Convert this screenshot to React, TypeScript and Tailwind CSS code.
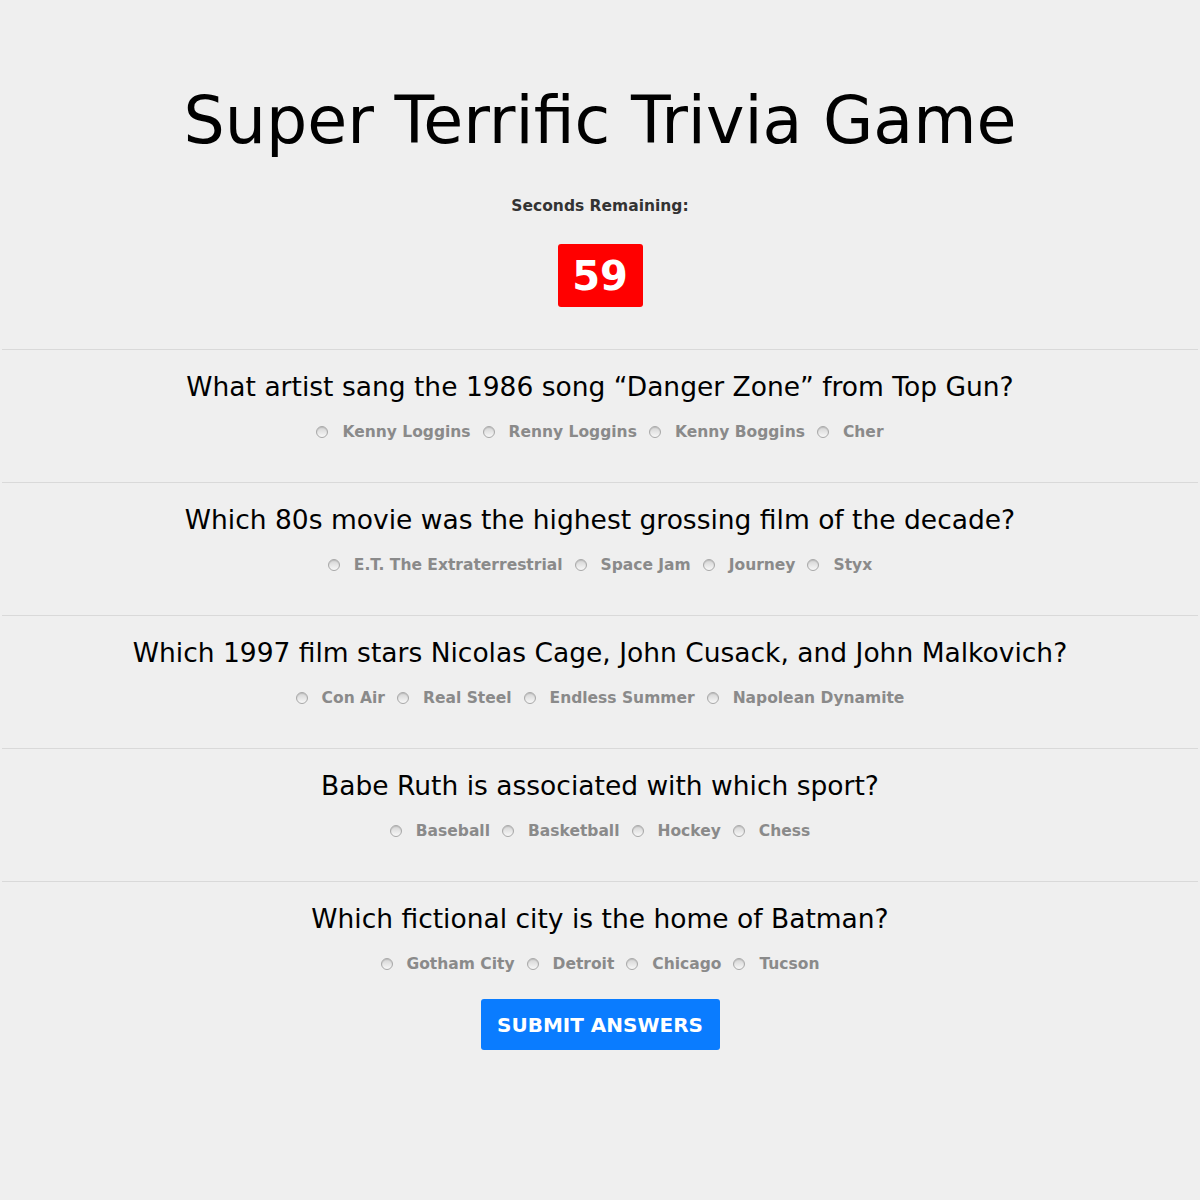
import React from 'react';

const questions = [
    {
        q: 'What artist sang the 1986 song \u201cDanger Zone\u201d from Top Gun?',
        a: ['Kenny Loggins', 'Renny Loggins', 'Kenny Boggins', 'Cher'],
    },
    {
        q: 'Which 80s movie was the highest grossing film of the decade?',
        a: ['E.T. The Extraterrestrial', 'Space Jam', 'Journey', 'Styx'],
    },
    {
        q: 'Which 1997 film stars Nicolas Cage, John Cusack, and John Malkovich?',
        a: ['Con Air', 'Real Steel', 'Endless Summer', 'Napolean Dynamite'],
    },
    {
        q: 'Babe Ruth is associated with which sport?',
        a: ['Baseball', 'Basketball', 'Hockey', 'Chess'],
    },
    {
        q: 'Which fictional city is the home of Batman?',
        a: ['Gotham City', 'Detroit', 'Chicago', 'Tucson'],
    },
];

const Radio = () => (
    <span className="inline-block w-[12px] h-[12px] rounded-full border border-[#a8a8a8] bg-gradient-to-b from-[#d4d4d4] to-[#f8f8f8] shadow-[inset_0_1px_1px_rgba(0,0,0,0.12)]" />
);

const Question = ({ q, a, last }: { q: string; a: string[]; last?: boolean }) => (
    <div className={last ? 'pt-[21px]' : 'pt-[21px] pb-[38px] border-b border-[#d9d9d9]'}>
        <h2 className="text-center text-[26.5px] leading-[32px] text-black">{q}</h2>
        <div className="mt-[17px] flex items-center justify-center gap-[12px] text-[15.5px] leading-[24px] font-bold text-[#8a8a8a]">
            {a.map((ans) => (
                <label key={ans} className="flex items-center gap-[14px]">
                    <Radio />
                    <span>{ans}</span>
                </label>
            ))}
        </div>
    </div>
);

const App = () => {
    return (
        <div className="w-full min-h-[1200px] bg-[#efefef] font-['DejaVu_Sans',sans-serif]">
            <div className="pt-[79px] text-center">
                <h1 className="text-[65px] leading-[84px] text-black">Super Terrific Trivia Game</h1>
                <p className="mt-[33px] text-[15.5px] leading-[20px] font-bold text-[#333]">Seconds Remaining:</p>
                <div className="mt-[28px] flex justify-center">
                    <div className="w-[85px] h-[63px] bg-[#ff0000] rounded-[3px] flex items-center justify-center text-white text-[40px] font-bold">
                        59
                    </div>
                </div>
            </div>
            <div className="mx-[2px] mt-[42px] border-t border-[#d9d9d9]">
                {questions.map((item, i) => (
                    <Question key={item.q} q={item.q} a={item.a} last={i === questions.length - 1} />
                ))}
            </div>
            <div className="mt-[23px] flex justify-center">
                <button className="w-[239px] h-[51px] bg-[#0a7cff] rounded-[3px] text-white text-[20px] font-semibold">
                    SUBMIT ANSWERS
                </button>
            </div>
        </div>
    );
};

export default App;
